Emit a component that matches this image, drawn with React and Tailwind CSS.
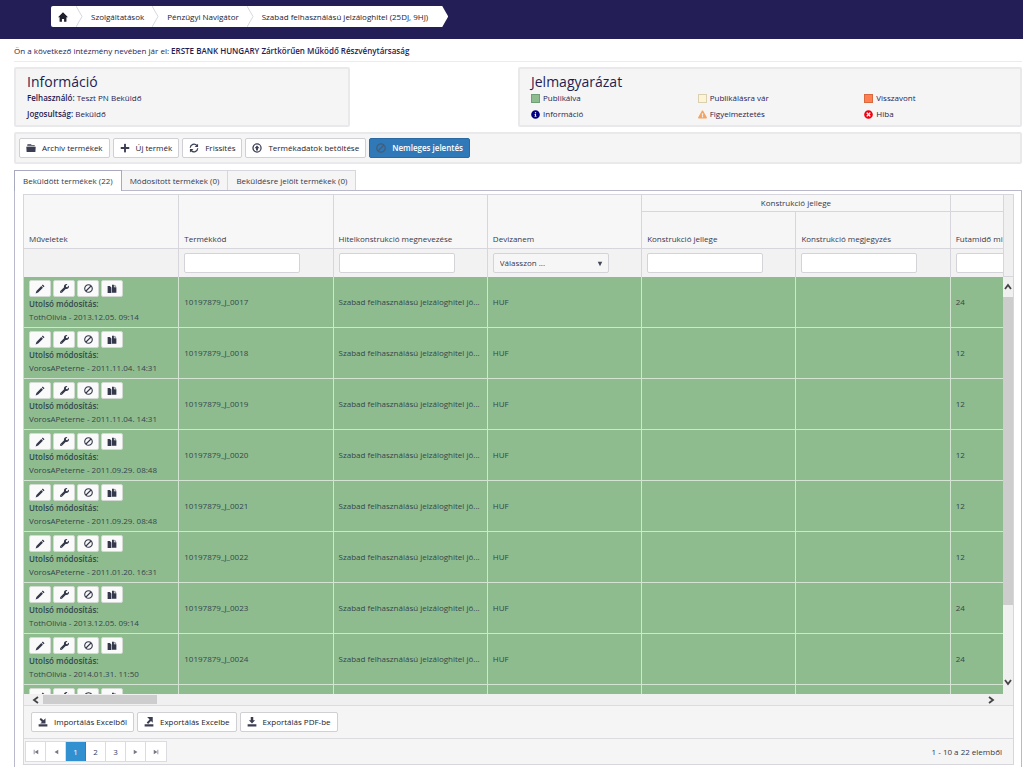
import { useState } from 'react';
import clsx from 'clsx';
import {
  FaBan,
  FaExclamationTriangle,
  FaInfoCircle,
  FaPlus,
  FaTimesCircle,
  FaWrench,
} from 'react-icons/fa';

const products = [
  { code: '10197879_J_0017', user: 'TothOlivia', date: '2013.12.05. 09:14', term: 24 },
  { code: '10197879_J_0018', user: 'VorosAPeterne', date: '2011.11.04. 14:31', term: 12 },
  { code: '10197879_J_0019', user: 'VorosAPeterne', date: '2011.11.04. 14:31', term: 12 },
  { code: '10197879_J_0020', user: 'VorosAPeterne', date: '2011.09.29. 08:48', term: 12 },
  { code: '10197879_J_0021', user: 'VorosAPeterne', date: '2011.09.29. 08:48', term: 12 },
  { code: '10197879_J_0022', user: 'VorosAPeterne', date: '2011.01.20. 16:31', term: 12 },
  { code: '10197879_J_0023', user: 'TothOlivia', date: '2013.12.05. 09:14', term: 24 },
  { code: '10197879_J_0024', user: 'TothOlivia', date: '2014.01.31. 11:50', term: 24 },
];

const tabs = ['Beküldött termékek (22)', 'Módosított termékek (0)', 'Beküldésre jelölt termékek (0)'];

function HomeIcon() {
  return (
    <svg viewBox="0 0 16 16" className="size-2.5" fill="currentColor" aria-hidden="true">
      <path d="M8 0.500l8 8h-2.500V15.500H9.700v-4.500H6.300v4.500H2.500V8.500H0z" />
    </svg>
  );
}

function FolderIcon() {
  return (
    <svg viewBox="0 0 16 16" className="size-2.5" fill="currentColor" aria-hidden="true">
      <path d="M3 1.500h5l1 1.500h5v2H2V2.500z" opacity="0.75" />
      <path d="M0.500 6h15L15 14.500H1z" />
    </svg>
  );
}

function PencilIcon() {
  return (
    <svg viewBox="0 0 16 16" className="size-2.5" fill="currentColor" aria-hidden="true">
      <path d="M12.500 0.800l2.700 2.700-1.600 1.600-2.700-2.700zM10 3.300L12.700 6 5 13.700 1 15l1.300-4z" />
    </svg>
  );
}

function RefreshIcon() {
  return (
    <svg viewBox="0 0 16 16" className="size-2.5" fill="none" stroke="currentColor" strokeWidth="2" aria-hidden="true">
      <path d="M2 7.500a6 6 0 0 1 10.500-3.500M14 8.500a6 6 0 0 1-10.500 3.500" />
      <path d="M14.500 1v5.500H9zM1.500 15V9.500H7z" fill="currentColor" stroke="none" />
    </svg>
  );
}

function LoadIcon() {
  return (
    <svg viewBox="0 0 16 16" className="size-2.5" aria-hidden="true">
      <circle cx="8" cy="8" r="6.500" fill="none" stroke="currentColor" strokeWidth="2" />
      <path d="M8 4l4 4.500H9.500V12h-3V8.500H4z" fill="currentColor" />
    </svg>
  );
}

function CopyIcon() {
  return (
    <svg viewBox="0 0 16 16" className="size-2.5" fill="currentColor" aria-hidden="true">
      <path d="M1 3h3.500l2.500 2.500V14.500H1z" />
      <path d="M8 1h3v4h4v9H8z" />
      <path d="M12 1l3 3h-3z" />
    </svg>
  );
}

function ImportIcon() {
  return (
    <svg viewBox="0 0 16 16" className="size-2.5" fill="currentColor" aria-hidden="true">
      <path d="M1 11.500h14v3.500H1zM12 2v8.500H3.500l2.700-2.700L2.500 3.600 4.600 1.500l4.200 3.700z" />
    </svg>
  );
}

function ExportIcon() {
  return (
    <svg viewBox="0 0 16 16" className="size-2.5" fill="currentColor" aria-hidden="true">
      <path d="M1 11.500h14v3.500H1zM5 0h9v9l-2.800-2.800L6.500 11 4.300 8.800 9 4z" />
    </svg>
  );
}

function DownIcon() {
  return (
    <svg viewBox="0 0 16 16" className="size-2.5" fill="currentColor" aria-hidden="true">
      <path d="M1 11.500h14v3.500H1zM6 0h4v5h3l-5 5.500L3 5h3z" />
    </svg>
  );
}

function Separator() {
  return (
    <svg viewBox="0 0 7 21" className="h-[21px] w-[7px]" fill="none" stroke="#d5d8e0" aria-hidden="true">
      <path d="M0 0l6 10.500L0 21" />
    </svg>
  );
}

function Chevron({ className }) {
  return (
    <svg viewBox="0 0 8 8" className={clsx('size-2', className)} fill="none" stroke="#444" strokeWidth="1.800" aria-hidden="true">
      <path d="M1 6l3-4 3 4" />
    </svg>
  );
}

function ToolButton({ icon, primary, children }) {
  return (
    <button
      type="button"
      className={clsx(
        'flex h-5 items-center gap-1.5 rounded-xs border px-1.5 whitespace-nowrap',
        primary ? 'border-[#2b69a4] bg-[#3079b9] font-semibold text-white' : 'border-[#cfcfd4] bg-white text-[#22222e]'
      )}
    >
      <span className={primary ? 'text-[#3f5f7d]' : 'text-[#3b3e52]'}>{icon}</span>
      {children}
    </button>
  );
}

function RowButton({ label, children }) {
  return (
    <button
      type="button"
      aria-label={label}
      className="flex h-[17px] w-[22px] items-center justify-center rounded-xs border border-[#d3dad3] bg-[#fafafa] text-[#34384a]"
    >
      {children}
    </button>
  );
}

function RowActions() {
  return (
    <div className="flex gap-[2px]">
      <RowButton label="Szerkesztés"><PencilIcon /></RowButton>
      <RowButton label="Beállítás"><FaWrench className="size-[9px]" /></RowButton>
      <RowButton label="Visszavonás"><FaBan className="size-[9px] -scale-x-100" /></RowButton>
      <RowButton label="Másolás"><CopyIcon /></RowButton>
    </div>
  );
}

function Legend({ icon, children }) {
  return (
    <div className="flex h-4 items-center gap-[3px] pl-[11px]">
      {icon}
      {children}
    </div>
  );
}

function FilterInput({ label }) {
  return (
    <input
      type="text"
      aria-label={label}
      className="block h-5 w-[116px] rounded-xs border border-[#d4d4d8] bg-white px-1.5 outline-none"
    />
  );
}

function PagerButton({ label, current, children }) {
  return (
    <button
      type="button"
      aria-label={label}
      className={clsx(
        'flex h-[19px] w-5 items-center justify-center border-r last:border-r-0',
        current ? 'border-[#2a80bf] bg-[#3190d0] text-white' : 'border-[#dcdce0] bg-white text-[#3b3e52]'
      )}
    >
      {children}
    </button>
  );
}

function PagerArrow({ bar, flip }) {
  return (
    <svg viewBox="0 0 8 8" className={clsx('size-1.5', flip && 'rotate-180')} fill="#777986" aria-hidden="true">
      <path d="M1 1l5 3-5 3z" />
      {bar && <path d="M6 1h1v6H6z" />}
    </svg>
  );
}

const headCell = 'border-l border-[#d6d6dc] px-[5px] pb-[3px] text-left align-bottom font-normal';
const filterCell = 'border-t border-l border-[#d6d6dc] px-[5px]';
const bodyCell = 'border-b border-l border-[#d3e4d3] px-[5px] first:border-l-0';

function ProductTable() {
  return (
    <table className="w-[1080px] min-w-full table-fixed border-separate border-spacing-0">
      <thead className="text-[#363848]">
        <tr className="h-[17px] bg-[#f7f7f7]">
          <th rowSpan={2} className="px-[5px] pb-[3px] text-left align-bottom font-normal">Műveletek</th>
          <th rowSpan={2} className={headCell}>Termékkód</th>
          <th rowSpan={2} className={headCell}>Hitelkonstrukció megnevezése</th>
          <th rowSpan={2} className={headCell}>Devizanem</th>
          <th colSpan={2} className="border-b border-l border-[#d6d6dc] align-middle font-normal">Konstrukció jellege</th>
          <td className="border-b border-l border-[#d6d6dc]"></td>
        </tr>
        <tr className="h-9 bg-[#f6f6f6]">
          <th className={headCell}>Konstrukció jellege</th>
          <th className={headCell}>Konstrukció megjegyzés</th>
          <th className={clsx(headCell, 'whitespace-nowrap')}>Futamidő min</th>
        </tr>
        <tr className="h-[29px] bg-[#f2f2f3]">
          <td className="border-t border-[#d6d6dc]"></td>
          <td className={filterCell}><FilterInput label="Termékkód" /></td>
          <td className={filterCell}><FilterInput label="Hitelkonstrukció megnevezése" /></td>
          <td className={filterCell}>
            <div className="relative w-[116px]">
              <select aria-label="Devizanem" className="block h-5 w-full appearance-none rounded-xs border border-[#d4d4d8] bg-[#f6f6f7] px-1.5 outline-none">
                <option>Válasszon ...</option>
                <option>HUF</option>
              </select>
              <svg viewBox="0 0 8 8" className="pointer-events-none absolute top-2 right-1.5 size-1.5" fill="#44475a" aria-hidden="true">
                <path d="M1 1h6L4 7z" />
              </svg>
            </div>
          </td>
          <td className={filterCell}><FilterInput label="Konstrukció jellege" /></td>
          <td className={filterCell}><FilterInput label="Konstrukció megjegyzés" /></td>
          <td className={filterCell}><FilterInput label="Futamidő" /></td>
        </tr>
      </thead>
      <tbody className="bg-[#8fbc8f] text-[#33474c]">
        {products.map((product) => (
          <tr key={product.code} className="h-[51px]">
            <td className={clsx(bodyCell, 'pb-px')}>
              <RowActions />
              <div className="leading-[13px] font-semibold">Utolsó módosítás:</div>
              <div className="leading-[13px] whitespace-nowrap">{product.user} - {product.date}</div>
            </td>
            <td className={bodyCell}>{product.code}</td>
            <td className={clsx(bodyCell, 'whitespace-nowrap')}>Szabad felhasználású jelzáloghitel jö...</td>
            <td className={bodyCell}>HUF</td>
            <td className={bodyCell}></td>
            <td className={bodyCell}></td>
            <td className={bodyCell}>{product.term}</td>
          </tr>
        ))}
        {/* next row, only its top edge is in view */}
        <tr className="h-[51px]">
          <td className={clsx(bodyCell, 'pt-[3px] align-top')}><RowActions /></td>
          <td className={bodyCell}></td>
          <td className={bodyCell}></td>
          <td className={bodyCell}></td>
          <td className={bodyCell}></td>
          <td className={bodyCell}></td>
          <td className={bodyCell}></td>
        </tr>
      </tbody>
    </table>
  );
}

function App() {
  const [activeTab, setActiveTab] = useState(0);

  return (
    <div className="flex min-h-screen flex-col bg-white font-['Open_Sans',sans-serif] text-[8px] leading-3 text-[#1f1c54]">
      {/* Header */}
      <header className="h-[39px] bg-[#231f56] pt-1.5 pl-[51px]">
        <nav className="flex h-[21px] w-fit items-center rounded-l-xs bg-white pr-5 pl-[7px] text-[#22222e] [clip-path:polygon(0_0,calc(100%-6px)_0,100%_50%,calc(100%-6px)_100%,0_100%)]">
          <a href="#" aria-label="Kezdőlap" className="pr-2"><HomeIcon /></a>
          <Separator />
          <a href="#" className="px-2">Szolgáltatások</a>
          <Separator />
          <a href="#" className="px-2">Pénzügyi Navigátor</a>
          <Separator />
          <a href="#" className="pl-2">Szabad felhasználású jelzáloghitel (25DJ, 9HJ)</a>
        </nav>
      </header>

      <main className="flex grow flex-col pr-px pl-3.5">
        <p className="border-b border-[#ececec] pt-[6px] pb-1">
          Ön a következő intézmény nevében jár el: <b className="font-semibold">ERSTE BANK HUNGARY Zártkörűen Működő Részvénytársaság</b>
        </p>

        {/* Info panels */}
        <div className="mt-[5px] grid grid-cols-6">
          <section className="col-span-2 h-[60px] rounded-xs border-2 border-[#e9e9eb] bg-[#f5f5f5] px-[11px] pt-1">
            <h2 className="text-[14px] leading-[17px]">Információ</h2>
            <p className="leading-4"><b className="font-semibold">Felhasználó:</b> Teszt PN Beküldő</p>
            <p className="leading-4"><b className="font-semibold">Jogosultság:</b> Beküldő</p>
          </section>
          <section className="col-span-3 col-start-4 h-[60px] rounded-xs border-2 border-[#e9e9eb] bg-[#f5f5f5] pt-1">
            <h2 className="pl-[11px] text-[14px] leading-[17px]">Jelmagyarázat</h2>
            <div className="grid grid-cols-3">
              <Legend icon={<span className="size-[9px] border border-[#6f9f76] bg-[#8fbc8f]" />}>Publikálva</Legend>
              <Legend icon={<span className="size-[9px] border border-[#d8d0b0] bg-[#fdf3d5]" />}>Publikálásra vár</Legend>
              <Legend icon={<span className="size-[9px] border border-[#d8693f] bg-[#ff7f50]" />}>Visszavont</Legend>
              <Legend icon={<FaInfoCircle className="size-[9px] text-[#000080]" />}>Információ</Legend>
              <Legend icon={<FaExclamationTriangle className="size-[9px] text-[#f4a460]" />}>Figyelmeztetés</Legend>
              <Legend icon={<FaTimesCircle className="size-[9px] text-[#f00010]" />}>Hiba</Legend>
            </div>
          </section>
        </div>

        {/* Toolbar */}
        <div className="mt-[5px] flex gap-[3px] rounded-xs border-2 border-[#e9e9eb] bg-[#f5f5f5] px-[3px] py-1">
          <ToolButton icon={<FolderIcon />}>Archív termékek</ToolButton>
          <ToolButton icon={<FaPlus className="size-2.5" />}>Új termék</ToolButton>
          <ToolButton icon={<RefreshIcon />}>Frissítés</ToolButton>
          <ToolButton icon={<LoadIcon />}>Termékadatok betöltése</ToolButton>
          <ToolButton primary icon={<FaBan className="size-2.5 -scale-x-100" />}>Nemleges jelentés</ToolButton>
        </div>

        {/* Tabs */}
        <div role="tablist" className="mt-1.5 flex">
          {tabs.map((tab, index) => (
            <button
              key={tab}
              type="button"
              role="tab"
              aria-selected={activeTab === index}
              onClick={() => setActiveTab(index)}
              className={clsx(
                'border-t border-r px-2 text-[#363848] first:border-l',
                activeTab === index ? 'relative -mb-px h-[21px] border-[#a9a9c0] bg-white' : 'h-5 border-[#d6d6dc] bg-[#f5f5f6]'
              )}
            >
              {tab}
            </button>
          ))}
        </div>

        {/* Grid */}
        <div className="grow border-x border-t border-[#b9b9cb] pt-[3px] pr-[7px] pl-2">
          <div className="border border-[#d6d6dc] bg-[#f5f5f5]">
            <div className="flex h-[499px]">
              <div className="min-w-0 flex-1 overflow-hidden">
                <ProductTable />
              </div>
              <div className="flex w-2.5 flex-col bg-[#f0f0f0]">
                <div className="h-[82px] border-b border-l border-[#d6d6dc]"></div>
                <div className="flex h-5 items-center justify-center"><Chevron /></div>
                <div className="h-[308px] bg-[#cdcdcd]"></div>
                <div className="mt-auto flex h-6 items-center justify-center"><Chevron className="rotate-180" /></div>
              </div>
            </div>
            <div className="flex h-[11px] items-center bg-[#f0f0f0] pr-[18px] pl-2">
              <Chevron className="-rotate-90" />
              <div className="ml-[3px] h-[9px] w-[114px] bg-[#cdcdcd]"></div>
              <Chevron className="ml-auto rotate-90" />
            </div>
            <div className="flex gap-[3px] border-y border-[#dcdce0] px-[7px] py-[6px]">
              <ToolButton icon={<ImportIcon />}>Importálás Excelből</ToolButton>
              <ToolButton icon={<ExportIcon />}>Exportálás Excelbe</ToolButton>
              <ToolButton icon={<DownIcon />}>Exportálás PDF-be</ToolButton>
            </div>
            <div className="flex items-center justify-between py-[2px] pr-[11px] pl-px text-[#363848]">
              <div className="flex border border-[#dcdce0]">
                <PagerButton label="Első oldal"><PagerArrow bar flip /></PagerButton>
                <PagerButton label="Előző oldal"><PagerArrow flip /></PagerButton>
                <PagerButton current>1</PagerButton>
                <PagerButton>2</PagerButton>
                <PagerButton>3</PagerButton>
                <PagerButton label="Következő oldal"><PagerArrow /></PagerButton>
                <PagerButton label="Utolsó oldal"><PagerArrow bar /></PagerButton>
              </div>
              <span>1 - 10 a 22 elemből</span>
            </div>
          </div>
        </div>
      </main>
    </div>
  );
}

export default App;
